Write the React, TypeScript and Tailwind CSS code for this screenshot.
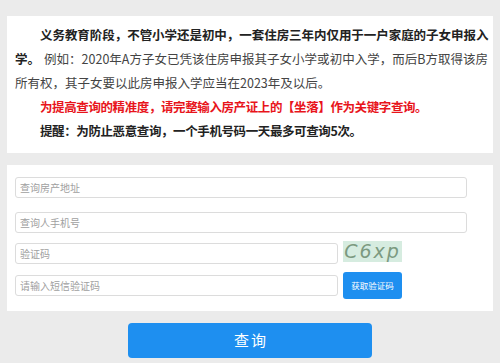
export default function App() {
  const font = { fontFamily: '"Noto Sans CJK SC", "Noto Sans", sans-serif' };
  return (
    <div className="w-[500px] h-[363px] bg-[#ebebeb] overflow-hidden pt-[16px]" style={font}>
      <div className="mx-[7px] bg-white pl-[8px] pr-[5px] pt-[7px] pb-[10px] text-[12.5px] leading-[24px] text-[#444]">
        <p className="indent-[25px] font-bold text-[#222] tracking-[-0.4px] text-justify [text-align-last:justify] whitespace-nowrap">义务教育阶段，不管小学还是初中，一套住房三年内仅用于一户家庭的子女申报入</p>
        <p className="text-justify">
          <span className="font-bold text-[#222] mr-[4px]">学。</span>例如：2020年A方子女已凭该住房申报其子女小学或初中入学，而后B方取得该房所有权，其子女要以此房申报入学应当在2023年及以后。
        </p>
        <p className="indent-[25px] font-bold text-[#e8141b] tracking-[-0.4px]">为提高查询的精准度，请完整输入房产证上的【坐落】作为关键字查询。</p>
        <p className="indent-[25px] font-bold text-[#222] tracking-[-0.4px]">提醒：为防止恶意查询，一个手机号码一天最多可查询5次。</p>
      </div>
      <div className="mx-[7px] mt-[12px] bg-white h-[146px] pl-[8px] pr-[26px] pt-[12px] flex flex-col">
        <div className="h-[21px] border border-[#dcdcdc] rounded-[3px] flex items-center px-[4px] text-[10px] text-[#a0a0a0]">查询房产地址</div>
        <div className="mt-[14px] h-[21px] border border-[#dcdcdc] rounded-[3px] flex items-center px-[4px] text-[10px] text-[#a0a0a0]">查询人手机号</div>
        <div className="mt-[10px] flex items-center gap-[5px]">
          <div className="w-[323px] h-[21px] border border-[#dcdcdc] rounded-[3px] flex items-center px-[4px] text-[10px] text-[#a0a0a0]">验证码</div>
          <div className="w-[59px] h-[21px] -mt-[5px] bg-[#d6ece0] flex items-center justify-center text-[19px] italic text-[#7c9a80] tracking-[2px] leading-none" style={{ fontFamily: '"DejaVu Sans", sans-serif' }}>C6xp</div>
        </div>
        <div className="mt-[8px] flex items-center gap-[5px]">
          <div className="w-[323px] h-[21px] border border-[#dcdcdc] rounded-[3px] flex items-center px-[4px] text-[10px] text-[#a0a0a0]">请输入短信验证码</div>
          <div className="w-[59px] h-[27px] rounded-[3px] bg-[#1e8ff0] flex items-center justify-center text-[8.5px] text-white">获取验证码</div>
        </div>
      </div>
      <div className="flex justify-center mt-[12px]">
        <div className="w-[244px] h-[35px] rounded-[4px] bg-[#1e8ff0] flex items-center justify-center text-[15px] text-white tracking-[2px] pl-[2px]">查询</div>
      </div>
    </div>
  );
}
